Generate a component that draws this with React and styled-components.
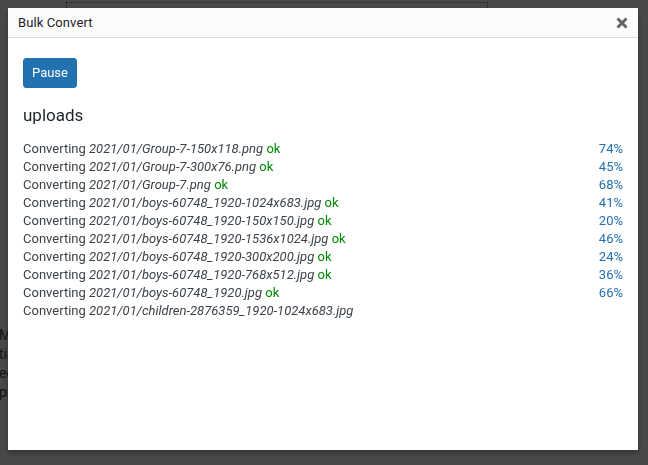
import React from "react";
import styled, { createGlobalStyle } from "styled-components";

const Global = createGlobalStyle`
  html, body { margin: 0; padding: 0; }
  body {
    width: 648px;
    height: 465px;
    overflow: hidden;
    background: #f0f0f1;
    font-family: "Segoe UI", Roboto, "Noto Sans", sans-serif;
    color: #3c434a;
  }
`;

const Page = styled.div`
  height: 465px;
  display: flex;
  flex-direction: column;
`;

const DottedBox = styled.div`
  margin: 2px 0 0 66px;
  width: 420px;
  height: 200px;
  border: 1px dotted #777;
`;

const PageText = styled.div`
  margin: 122px 0 0 -1px;
  font-size: 14px;
  line-height: 19px;
  color: #3c434a;
`;

const Overlay = styled.div`
  position: fixed;
  inset: 0;
  background: rgba(0, 0, 0, 0.7);
`;

const Modal = styled.div`
  position: fixed;
  left: 8px;
  top: 8px;
  width: 630px;
  height: 442px;
  background: #fff;
  box-shadow: 0 3px 6px rgba(0, 0, 0, 0.3);
  display: flex;
  flex-direction: column;
`;

const Header = styled.div`
  height: 29px;
  flex: none;
  background: #fcfcfc;
  border-bottom: 1px solid #dcdcde;
  display: flex;
  align-items: center;
  justify-content: space-between;
  padding: 0 9px 0 10px;
`;

const Title = styled.div`
  font-size: 13px;
  font-weight: 400;
  color: #1d2327;
  letter-spacing: 0.1px;
`;

const Close = styled.button`
  border: 0;
  background: none;
  padding: 0;
  width: 14px;
  height: 14px;
  display: flex;
  align-items: center;
  justify-content: center;
  cursor: pointer;
`;

const Body = styled.div`
  padding: 20px 15px;
  display: flex;
  flex-direction: column;
  align-items: flex-start;
`;

const Button = styled.button`
  background: #2271b1;
  border: 1px solid #2271b1;
  border-radius: 3px;
  color: #fff;
  font-family: inherit;
  font-size: 13px;
  height: 30px;
  padding: 0 8px;
  line-height: 28px;
`;

const Heading = styled.h2`
  font-size: 17px;
  font-weight: 400;
  color: #1d2327;
  margin: 16px 0 14px;
  line-height: 22px;
`;

const List = styled.div`
  align-self: stretch;
  display: flex;
  flex-direction: column;
  font-size: 13px;
  line-height: 18px;
`;

const Row = styled.div`
  display: flex;
  justify-content: space-between;
`;

const File = styled.em`
  font-style: italic;
`;

const Ok = styled.span`
  color: #008a00;
`;

const Pct = styled.span`
  color: #2271b1;
`;

const rows = [
  ["2021/01/Group-7-150x118.png", "74%"],
  ["2021/01/Group-7-300x76.png", "45%"],
  ["2021/01/Group-7.png", "68%"],
  ["2021/01/boys-60748_1920-1024x683.jpg", "41%"],
  ["2021/01/boys-60748_1920-150x150.jpg", "20%"],
  ["2021/01/boys-60748_1920-1536x1024.jpg", "46%"],
  ["2021/01/boys-60748_1920-300x200.jpg", "24%"],
  ["2021/01/boys-60748_1920-768x512.jpg", "36%"],
  ["2021/01/boys-60748_1920.jpg", "66%"],
  ["2021/01/children-2876359_1920-1024x683.jpg", null],
];

export default function App() {
  return (
    <>
      <Global />
      <Page>
        <DottedBox />
        <PageText>
          <div>M</div>
          <div>tic</div>
          <div>ec</div>
          <div>pr</div>
        </PageText>
      </Page>
      <Overlay />
      <Modal>
        <Header>
          <Title>Bulk Convert</Title>
          <Close aria-label="Close">
            <svg width="12" height="12" viewBox="0 0 12 12">
              <path d="M1.5 1.5 L10.5 10.5 M10.5 1.5 L1.5 10.5" stroke="#666" strokeWidth="3" strokeLinecap="butt" />
            </svg>
          </Close>
        </Header>
        <Body>
          <Button>Pause</Button>
          <Heading>uploads</Heading>
          <List>
            {rows.map(([f, p]) => (
              <Row key={f}>
                <span>
                  Converting <File>{f}</File>
                  {p && <> <Ok>ok</Ok></>}
                </span>
                {p && <Pct>{p}</Pct>}
              </Row>
            ))}
          </List>
        </Body>
      </Modal>
    </>
  );
}
